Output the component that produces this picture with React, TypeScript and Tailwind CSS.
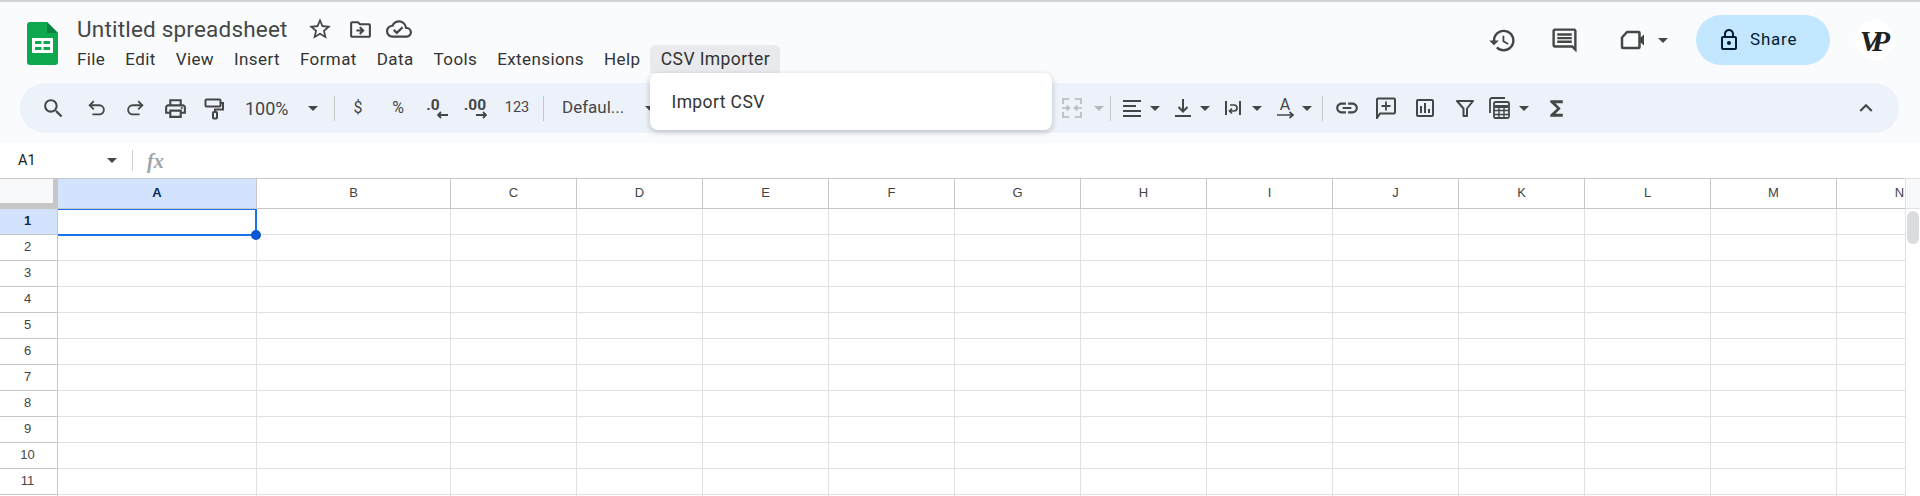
import React from "react";
import {
  MdSearch, MdOutlinePrint, MdStarBorder, MdOutlineDriveFileMove,
  MdOutlineCloudDone, MdHistory, MdOutlineComment, MdOutlineLock, MdLink, MdOutlineAssessment,
  MdFunctions, MdExpandLess,
} from "react-icons/md";

const Caret = ({ cls = "", color = "#444746" }: { cls?: string; color?: string }) => (
  <svg width="10" height="5" viewBox="0 0 10 5" className={"shrink-0 " + cls}>
    <path d="M0 0h10L5 5z" fill={color} />
  </svg>
);

const Box = ({ cls = "", children }: { cls?: string; children?: React.ReactNode }) => (
  <div className={"w-7 h-7 flex items-center justify-center shrink-0 text-[#444746] " + cls}>{children}</div>
);

const Divider = ({ cls = "" }: { cls?: string }) => <div className={"w-px h-[25px] bg-[#c7c7c7] shrink-0 " + cls} />;

const Stroke = ({ children, size = 24 }: { children: React.ReactNode; size?: number }) => (
  <svg width={size} height={size} viewBox="0 0 24 24" fill="none" stroke="#444746" strokeWidth="2">
    {children}
  </svg>
);

const menu = ["File", "Edit", "View", "Insert", "Format", "Data", "Tools", "Extensions", "Help"];
const cols = ["A", "B", "C", "D", "E", "F", "G", "H", "I", "J", "K", "L", "M", "N"];
const rows = [1, 2, 3, 4, 5, 6, 7, 8, 9, 10, 11, 12];

export default function App() {
  return (
    <div className="h-[496px] w-[1920px] overflow-hidden bg-white font-['Roboto',sans-serif] text-[#444746]">
      <div className="h-[2px] bg-[#d4d4d4]" />
      <div className="h-[141px] bg-[#f9fbfd]">
        <div className="flex h-[81px]">
          <svg width="31" height="43" viewBox="0 0 31 43" className="ml-[27px] mt-[20px] shrink-0">
            <path d="M0 3a3 3 0 0 1 3-3h17l11 11v29a3 3 0 0 1-3 3H3a3 3 0 0 1-3-3z" fill="#10a84f" />
            <path d="M20 0l11 11H20z" fill="#0b8043" />
            <path d="M5 16h21v15H5zM8 19v3h6.500v-3zm8.500 0v3H23v-3zM8 25v3h6.500v-3zm8.500 0v3H23v-3z" fill="#fff" fillRule="evenodd" />
          </svg>
          <div className="ml-[19px] flex flex-col">
            <div className="flex items-center h-[34px] mt-[9px] pt-[2px]">
              <span className="text-[22.500px] leading-[30px] text-[#444746] tracking-[0.2px] w-[222px] whitespace-nowrap">Untitled spreadsheet</span>
              <MdStarBorder size={26} color="#444746" className="ml-[8px]" />
              <MdOutlineDriveFileMove size={25} color="#444746" className="ml-[15px]" />
              <MdOutlineCloudDone size={26} color="#444746" className="ml-[13px]" />
            </div>
            <div className="flex items-center h-[28px] text-[17px] tracking-[0.4px] text-[#333] whitespace-nowrap">
              {menu.map((m) => (
                <span key={m} className={m === "Help" ? "mt-[1px] mr-[10px]" : "mt-[1px] mr-[20px]"}>{m}</span>
              ))}
              <div className="relative">
                <div className="h-[28px] w-[130px] flex items-center justify-center bg-[#e8eaed] rounded-t-md text-[17.500px]">CSV Importer</div>
                <div className="absolute left-0 top-full z-10 w-[402px] h-[57px] bg-white rounded-lg shadow-[0_2px_5px_1px_rgba(60,64,67,0.22)] flex items-center pl-[21px] pt-[2px] text-[#333] text-[17.500px]">
                  Import CSV
                </div>
              </div>
            </div>
          </div>
          <div className="ml-auto flex items-center h-[50px] mt-[13px] mr-[25px]">
            <MdHistory size={29} color="#444746" />
            <MdOutlineComment size={29} color="#444746" className="ml-[33px]" />
            <svg width="28" height="28" viewBox="0 0 28 28" className="ml-[39px]" fill="none" stroke="#444746" strokeWidth="2.500">
              <path d="M9 6h11.500a1 1 0 0 1 1 1v14a1 1 0 0 1-1 1H5a1 1 0 0 1-1-1V11.500z" strokeLinejoin="round" />
              <path d="M22 12l4-3.500v11L22 16z" fill="#444746" stroke="none" />
            </svg>
            <Caret cls="ml-[12px]" />
            <div className="ml-[28px] w-[134px] h-[50px] rounded-full bg-[#c2e7ff] flex items-center text-[#001d35]">
              <MdOutlineLock size={24} color="#001d35" className="ml-[21px]" />
              <span className="ml-[9px] text-[17px] tracking-[0.8px]">Share</span>
            </div>
            <div className="ml-[25px] w-10 h-10 rounded-full bg-white flex items-center justify-center font-['Liberation_Serif',serif] font-bold italic text-[30px] text-[#222] tracking-[-8px] pr-[8px]">
              VP
            </div>
          </div>
        </div>

        <div className="flex items-center h-[50px] ml-[20px] mr-[21px] rounded-full bg-[#edf2fa] relative">
          <Box cls="ml-[19px]"><MdSearch size={25} color="#444746" /></Box>
          <Box cls="ml-[16px]">
            <Stroke size={22}><path d="M4 9h10.500a5 5 0 0 1 0 10H7" /><path d="M8.500 4.500L4 9l4.500 4.500" /></Stroke>
          </Box>
          <Box cls="ml-[10px]">
            <Stroke size={22}><path d="M20 9H9.500a5 5 0 0 0 0 10H17" /><path d="M15.500 4.500L20 9l-4.500 4.500" /></Stroke>
          </Box>
          <Box cls="ml-[12px]"><MdOutlinePrint size={25} color="#444746" /></Box>
          <Box cls="ml-[10px]">
            <Stroke size={24}>
              <rect x="4.500" y="3.500" width="15" height="7" rx="1" />
              <path d="M19.500 7H22v6.500H14V16" />
              <rect x="12" y="16" width="4" height="6.500" rx="0.800" />
            </Stroke>
          </Box>
          <span className="ml-[18px] w-[46px] text-[18px] shrink-0 whitespace-nowrap">100%</span>
          <Caret cls="ml-[17px]" />
          <Divider cls="ml-[16px]" />
          <Box cls="ml-[9px] text-[16px] text-[#5f6368]">$</Box>
          <Box cls="ml-[12px] text-[16px] text-[#5f6368]">%</Box>
          <Box cls="ml-[14px] relative">
            <span className="text-[15.500px] font-bold -mt-[5px] -ml-[14px]">.0</span>
            <svg width="11" height="8" viewBox="0 0 11 8" className="absolute right-[6px] bottom-[3px]" fill="none" stroke="#444746" strokeWidth="1.800"><path d="M11 4H1M4 1L1 4l3 3" /></svg>
          </Box>
          <Box cls="ml-[14px] relative">
            <span className="text-[15.500px] font-bold -mt-[5px] -ml-[14px] whitespace-nowrap">.00</span>
            <svg width="11" height="8" viewBox="0 0 11 8" className="absolute right-[9px] bottom-[3px]" fill="none" stroke="#444746" strokeWidth="1.800"><path d="M0 4h10M7 1l3 3-3 3" /></svg>
          </Box>
          <Box cls="ml-[7px] text-[14.500px] text-[#5f6368]">123</Box>
          <Divider cls="ml-[12px]" />
          <span className="ml-[18px] w-[68px] text-[17px] shrink-0 whitespace-nowrap">Defaul...</span>
          <Caret cls="ml-[15px]" />

          <Box cls="ml-[403px]">
            <svg width="22" height="22" viewBox="0 0 22 22" fill="none" stroke="#b4b8bd" strokeWidth="1.600">
              <path d="M2 7V2h6M20 7V2h-6M2 15v5h6M20 15v5h-6" />
              <path d="M1 11h7M5.500 8.500L8.500 11l-3 2.500M21 11h-7M16.500 8.500L13.500 11l3 2.500" />
            </svg>
          </Box>
          <Caret cls="ml-[8px]" color="#b4b8bd" />
          <Divider cls="ml-[6px]" />
          <Box cls="ml-[7px]">
            <svg width="18" height="17" viewBox="0 0 18 17" fill="#444746"><path d="M0 0h18v2H0zM0 5h13v2H0zM0 10h18v2H0zM0 15h18v2H0z" /></svg>
          </Box>
          <Caret cls="ml-[4px]" />
          <Box cls="ml-[9px]">
            <svg width="16" height="18" viewBox="0 0 16 18" fill="none" stroke="#444746" strokeWidth="2"><path d="M0 17h16M8 0v12M3.500 8L8 12.500 12.500 8" /></svg>
          </Box>
          <Caret cls="ml-[3px]" />
          <Box cls="ml-[9px]">
            <svg width="16" height="16" viewBox="0 0 16 16" fill="none" stroke="#444746" strokeWidth="2"><path d="M1 1v14M15 1v14" /><path d="M5 5h4a2.500 2.500 0 0 1 0 6H5M7 8.500L4.500 11 7 13.500" strokeWidth="1.700" /></svg>
          </Box>
          <Caret cls="ml-[5px]" />
          <Box cls="ml-[9px] relative">
            <span className="text-[16px] leading-none -mt-[6px]">A</span>
            <svg width="18" height="8" viewBox="0 0 18 8" className="absolute left-[6px] bottom-[3px]" fill="none" stroke="#444746" strokeWidth="1.700"><path d="M0 4h16M12.500 1L16 4l-3.500 3" /></svg>
          </Box>
          <Caret cls="ml-[3px]" />
          <Divider cls="ml-[10px]" />
          <Box cls="ml-[10px]"><MdLink size={26} color="#444746" /></Box>
          <Box cls="ml-[11px]">
            <svg width="22" height="22" viewBox="0 0 22 22" fill="none" stroke="#444746" strokeWidth="2"><path d="M2 21V2.500a1 1 0 0 1 1-1h16a1 1 0 0 1 1 1v13a1 1 0 0 1-1 1H5z" /><path d="M11 4.500v9M6.500 9h9" strokeWidth="1.800" /></svg>
          </Box>
          <Box cls="ml-[11px]"><MdOutlineAssessment size={24} color="#444746" /></Box>
          <Box cls="ml-[12px]">
            <svg width="18" height="18" viewBox="0 0 18 18" fill="none" stroke="#444746" strokeWidth="2"><path d="M1 2h16l-6 7.500V17H7.500V9.500z" strokeLinejoin="round" /></svg>
          </Box>
          <Box cls="ml-[7px]">
            <svg width="22" height="22" viewBox="0 0 22 22" fill="none" stroke="#444746" strokeWidth="1.800">
              <path d="M16 1H3a2 2 0 0 0-2 2v13" />
              <rect x="5" y="5" width="15" height="16" rx="1.500" />
              <path d="M6 9.500h13" strokeWidth="3" />
              <path d="M5 13.500h15M5 17.500h15M10 11v10M15 11v10" strokeWidth="1.400" />
            </svg>
          </Box>
          <Caret cls="ml-[5px]" />
          <Box cls="ml-[13px]"><MdFunctions size={25} color="#444746" /></Box>
          <MdExpandLess size={26} color="#444746" className="ml-auto mr-[20px]" />
        </div>
      </div>

      <div className="flex items-center h-[35px] bg-white">
        <span className="ml-[18px] w-[80px] text-[14.500px] text-[#202124]">A1</span>
        <Caret cls="ml-[9px]" />
        <div className="ml-[15px] w-px h-[21px] bg-[#d0d0d0]" />
        <span className="ml-[14px] font-['Liberation_Serif',serif] italic font-bold text-[20px] text-[#a0a4a8]">fx</span>
      </div>

      <div className="flex font-['Liberation_Sans',sans-serif] text-[13px] text-[#444]">
        <div className="w-[1905px] shrink-0 overflow-hidden">
          <div className="flex h-[31px] border-y border-[#c7c7c7] w-[2100px]">
            <div className="w-[58px] shrink-0 bg-[#f8f9fa] border-r-[5px] border-b-[5px] border-[#c7c7c7]" />
            {cols.map((c, i) => (
              <div
                key={c}
                className={
                  "shrink-0 flex items-center justify-center border-r border-[#c7c7c7] pb-[2px] " +
                  (i === 0 ? "w-[199px] bg-[#d3e3fd] font-bold text-[#0b2a55]" : i === 1 ? "w-[194px]" : "w-[126px]")
                }
              >
                {c}
              </div>
            ))}
          </div>
          {rows.map((r) => (
            <div key={r} className="flex h-[26px] w-[2100px] relative">
              <div
                className={
                  "w-[58px] shrink-0 flex items-center justify-center border-r border-b border-r-[#c7c7c7] border-b-[#c7c7c7] pr-[2px] pb-[2px] " +
                  (r === 1 ? "bg-[#d3e3fd] font-bold text-[#0b2a55]" : "")
                }
              >
                {r < 12 ? r : ""}
              </div>
              {cols.map((c, i) => (
                <div
                  key={c}
                  className={
                    "shrink-0 border-r border-b border-[#e1e1e1] " +
                    (i === 0 ? "w-[199px]" : i === 1 ? "w-[194px]" : "w-[126px]")
                  }
                />
              ))}
              {r === 1 && (
                <>
                  <div className="absolute left-[58px] top-0 w-[199px] h-[27px] border-t-[1px] border-r-2 border-b-2 border-[#1a73e8]" />
                  <div className="absolute left-[251px] top-[21px] w-[10px] h-[10px] rounded-full bg-[#0b57d0] z-[1]" />
                </>
              )}
            </div>
          ))}
        </div>
        <div className="w-[15px] shrink-0 border-l border-[#e1e1e1] flex flex-col">
          <div className="h-[31px] bg-[#f8f9fa] border-y border-[#e1e1e1]" />
          <div className="mt-[2px] ml-[1px] w-[12px] h-[33px] rounded-full bg-[#dadce0]" />
        </div>
      </div>
    </div>
  );
}
